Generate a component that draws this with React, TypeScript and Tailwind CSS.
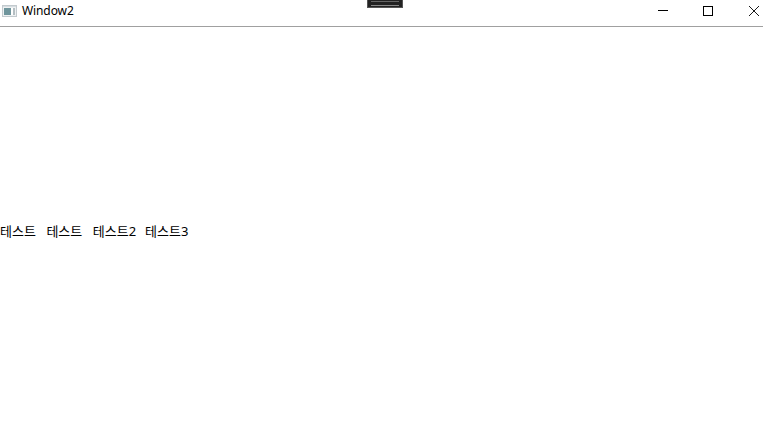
const LABELS = [
  { text: "테스트", digit: "" },
  { text: "테스트", digit: "" },
  { text: "테스트", digit: "2" },
  { text: "테스트", digit: "3" },
];

function AppIcon() {
  return (
    <svg width="15" height="12" viewBox="0 0 15 12" className="ml-[2px] mt-[2px]">
      <rect x="0.5" y="0.5" width="14" height="11" fill="#eef1f2" stroke="#c3cace" />
      <rect x="1" y="1" width="13" height="1" fill="#d5dce0" />
      <rect x="2" y="3" width="7" height="7" fill="#6f959c" />
      <rect x="9" y="3" width="2" height="7" fill="#ffffff" />
      <rect x="11" y="3" width="2" height="7" fill="#b4bec2" />
    </svg>
  );
}

function MinimizeIcon() {
  return (
    <svg width="10" height="10" viewBox="0 0 10 10">
      <path d="M0 4.5H10" stroke="#000" fill="none" />
    </svg>
  );
}

function MaximizeIcon() {
  return (
    <svg width="10" height="10" viewBox="0 0 10 10">
      <rect x="0.5" y="0.5" width="9" height="9" stroke="#000" fill="none" />
    </svg>
  );
}

function CloseIcon() {
  return (
    <svg width="10" height="10" viewBox="0 0 10 10" className="ml-[1px]">
      <path d="M0 0L10 10M10 0L0 10" stroke="#000" strokeWidth="0.9" fill="none" />
    </svg>
  );
}

export default function App() {
  return (
    <div className="relative w-[763px] h-[427px] bg-white overflow-hidden font-['Noto_Sans','Noto_Sans_CJK_KR',sans-serif] text-[12px] text-black">
      {/* Title bar */}
      <div className="flex items-center h-[27px] pb-[6px] border-b border-[#a0a0a0]">
        <AppIcon />
        <span className="ml-[5px] mt-[1px] leading-[20px] tracking-[-0.1px]">Window2</span>
        <div className="ml-auto mr-[4px] mt-[2px] flex items-center gap-[35px]">
          <MinimizeIcon />
          <MaximizeIcon />
          <CloseIcon />
        </div>
      </div>

      {/* Overlay handle peeking in at the top */}
      <div className="absolute left-[367px] top-0 w-[36px] h-[8px] bg-[#222222] border-x border-b border-[#555555] flex flex-col items-center">
        <div className="w-[28px] h-[1px] mt-[1px] bg-[#666666]" />
        <div className="w-[28px] h-[1px] mt-[3px] bg-[#888888]" />
      </div>

      {/* Content */}
      <div className="flex items-center h-[400px] pt-[7px] gap-[10.5px] text-[13px]">
        {LABELS.map((label, i) => (
          <span key={i} className="leading-[16px]">
            {label.text}
            {label.digit && <span className="tracking-[-1.5px]">{label.digit}</span>}
          </span>
        ))}
      </div>
    </div>
  );
}
